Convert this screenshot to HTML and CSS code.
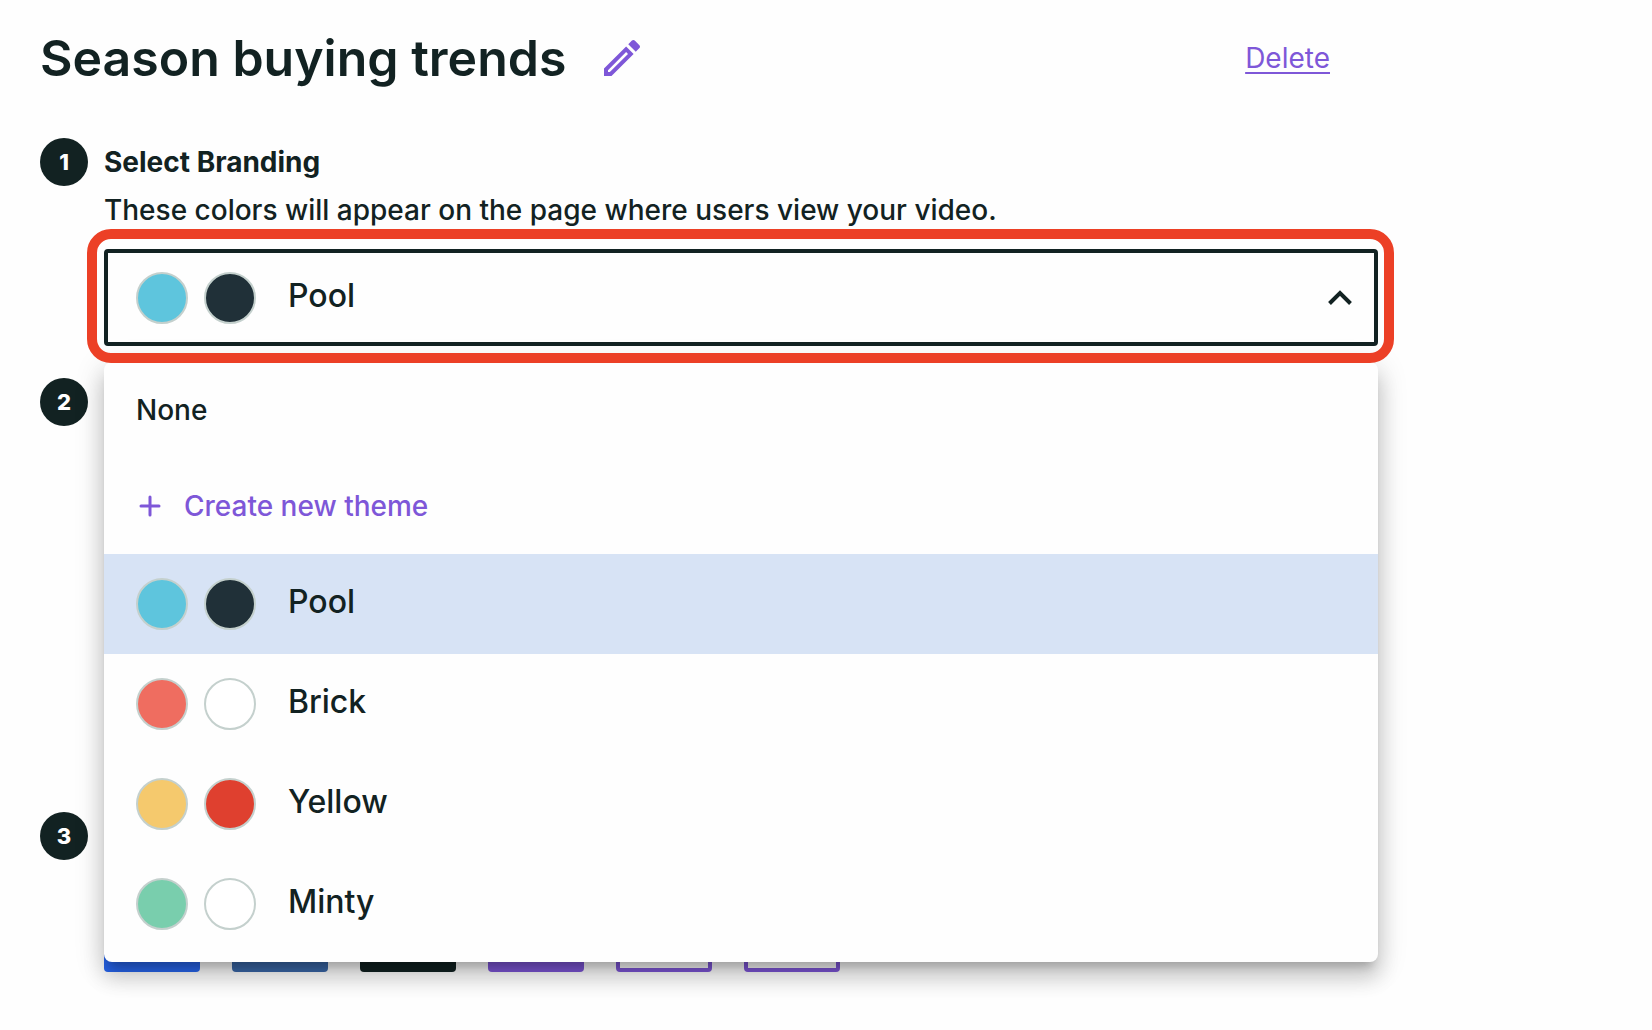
FILE: index.html
```html
<!DOCTYPE html>
<html lang="en">

<head>
  <meta charset="UTF-8">
  <meta name="viewport" content="width=device-width, initial-scale=1.0">
  <title>Season buying trends</title>
  <link rel="stylesheet" href="styles.css">
</head>

<body>
  <main class="container">
    <header class="page-header">
      <h1>Season buying trends</h1>
      <button class="edit-button" type="button" aria-label="Edit title">
        <svg viewBox="0 0 24 24" width="48" height="48" fill="currentColor">
          <path d="M14.06 9L15 9.94L5.92 19H5v-.92L14.06 9M17.66 3c-.25 0-.51.1-.7.29l-1.83 1.83l3.75 3.75l1.83-1.83c.39-.39.39-1.04 0-1.41l-2.34-2.34c-.2-.2-.45-.29-.71-.29M14.06 6.19L3 17.25V21h3.75L17.81 9.94L14.06 6.19z" />
        </svg>
      </button>
      <a class="delete-link" href="#">Delete</a>
    </header>

    <section class="step">
      <span class="step-number">1</span>
      <div class="step-body">
        <h2><label for="theme">Select Branding</label></h2>
        <p>These colors will appear on the page where users view your video.</p>

        <div class="dropdown">
          <div class="field">
            <span class="swatch pool"></span>
            <span class="swatch navy"></span>
            <select id="theme" name="theme">
              <option>None</option>
              <option selected>Pool</option>
              <option>Brick</option>
              <option>Yellow</option>
              <option>Minty</option>
            </select>
            <svg class="chevron" viewBox="0 0 24 16" width="24" height="16" fill="none" stroke="currentColor" stroke-width="4">
              <path d="M1.500 13.500L12 3L22.500 13.500" />
            </svg>
          </div>

          <ul class="menu">
            <li><button class="option plain" type="button">None</button></li>
            <li>
              <button class="option plain create" type="button">
                <svg viewBox="0 0 28 28" width="28" height="28" stroke="currentColor" stroke-width="3" stroke-linecap="round">
                  <path d="M14 5v18M5 14h18" />
                </svg>
                Create new theme
              </button>
            </li>
            <li>
              <button class="option selected" type="button">
                <span class="swatch pool"></span>
                <span class="swatch navy"></span>
                <span class="option-name">Pool</span>
              </button>
            </li>
            <li>
              <button class="option" type="button">
                <span class="swatch brick"></span>
                <span class="swatch white"></span>
                <span class="option-name">Brick</span>
              </button>
            </li>
            <li>
              <button class="option" type="button">
                <span class="swatch yellow"></span>
                <span class="swatch red"></span>
                <span class="option-name">Yellow</span>
              </button>
            </li>
            <li>
              <button class="option" type="button">
                <span class="swatch mint"></span>
                <span class="swatch white"></span>
                <span class="option-name">Minty</span>
              </button>
            </li>
          </ul>
        </div>
      </div>
    </section>

    <section class="step step-tall">
      <span class="step-number">2</span>
    </section>

    <section class="step">
      <span class="step-number">3</span>
      <div class="step-body share-buttons">
        <button class="share blue" type="button" aria-label="Facebook"></button>
        <button class="share steel" type="button" aria-label="LinkedIn"></button>
        <button class="share dark" type="button" aria-label="X"></button>
        <button class="share purple" type="button" aria-label="Email"></button>
        <button class="share outlined" type="button" aria-label="Copy link"></button>
        <button class="share outlined" type="button" aria-label="Embed"></button>
      </div>
    </section>
  </main>
</body>

</html>
```
FILE: styles.css
```css
* {
  box-sizing: border-box;
}

body {
  font-family: Inter, "Liberation Sans", sans-serif;
  font-size: 28px;
  font-weight: 500;
  color: #122222;
  background-color: #fefefe;
  margin: 0;
}

button,
select {
  font: inherit;
  color: inherit;
  border: none;
  background: none;
  padding: 0;
  margin: 0;
  cursor: pointer;
}

svg {
  display: block;
}

.container {
  max-width: 1418px;
  padding: 30px 40px 58px;
}

/* Title row */
.page-header {
  display: flex;
  align-items: center;
  gap: 32px;
  height: 56px;
  padding-right: 48px;
  margin-bottom: 52px;
}

h1 {
  font-size: 50px;
  font-weight: 600;
  line-height: 56px;
  margin: 0;
}

.edit-button,
.create,
.delete-link {
  color: #7e57d8;
}

.delete-link {
  margin-left: auto;
  font-weight: 400;
  text-decoration-thickness: 2px;
  text-underline-offset: 4px;
}

/* Numbered steps */
.step {
  display: flex;
  gap: 16px;
  margin-bottom: 32px;
}

.step-tall {
  min-height: 402px;
}

.step-number {
  display: flex;
  align-items: center;
  justify-content: center;
  flex: none;
  width: 48px;
  height: 48px;
  border-radius: 50%;
  background-color: #122222;
  color: #fff;
  font-size: 22px;
  font-weight: 800;
}

.step-body {
  flex: 1;
}

h2,
p {
  font-size: 28px;
  line-height: 48px;
  margin: 0;
}

h2 {
  font-weight: 700;
}

/* Theme drop-down */
.dropdown {
  position: relative;
  margin-top: 15px;
}

.dropdown::after {
  content: "";
  position: absolute;
  inset: -20px -16px -17px -17px;
  border: 10px solid #ec4026;
  border-radius: 24px;
  pointer-events: none;
  z-index: 2;
}

.field {
  display: flex;
  align-items: center;
  gap: 16px;
  height: 97px;
  padding: 0 22px 0 28px;
  border: 4px solid #122222;
  border-radius: 4px;
}

.field select {
  flex: 1;
  appearance: none;
  font-size: 32px;
  line-height: 40px;
  padding: 0 0 4px 16px;
  outline: none;
}

.menu {
  position: absolute;
  top: calc(100% + 16px);
  left: 0;
  right: 0;
  z-index: 1;
  list-style: none;
  margin: 0;
  padding: 0 0 8px;
  background-color: #fefefe;
  border-radius: 8px;
  box-shadow: 0 10px 10px -6px rgba(0, 0, 0, 0.2), 0 16px 20px 2px rgba(0, 0, 0, 0.14), 0 6px 28px 4px rgba(0, 0, 0, 0.12);
}

.option {
  display: flex;
  align-items: center;
  gap: 16px;
  width: 100%;
  height: 100px;
  padding: 0 32px;
  font-size: 32px;
  text-align: left;
}

.option.plain {
  height: 96px;
  gap: 20px;
  font-size: 28px;
}

.option.selected {
  background-color: #d7e3f5;
}

.option-name {
  padding: 0 0 6px 16px;
}

.swatch {
  flex: none;
  width: 52px;
  height: 52px;
  border: 2px solid #c4d0cd;
  border-radius: 50%;
}

.pool {
  background-color: #5ec5dd;
}

.navy {
  background-color: #203038;
}

.brick {
  background-color: #ef6d60;
}

.white {
  background-color: #fff;
}

.yellow {
  background-color: #f5c96d;
}

.red {
  background-color: #df402f;
}

.mint {
  background-color: #79cead;
}

/* Sharing */
.share-buttons {
  display: flex;
  flex-wrap: wrap;
  gap: 32px;
  padding-top: 64px;
}

.share {
  width: 96px;
  height: 96px;
  border-radius: 4px;
}

.blue {
  background-color: #2867f0;
}

.steel {
  background-color: #3b69aa;
}

.dark {
  background-color: #122222;
}

.purple {
  background-color: #7e57d8;
}

.outlined {
  border: 4px solid #7e57d8;
}
```
